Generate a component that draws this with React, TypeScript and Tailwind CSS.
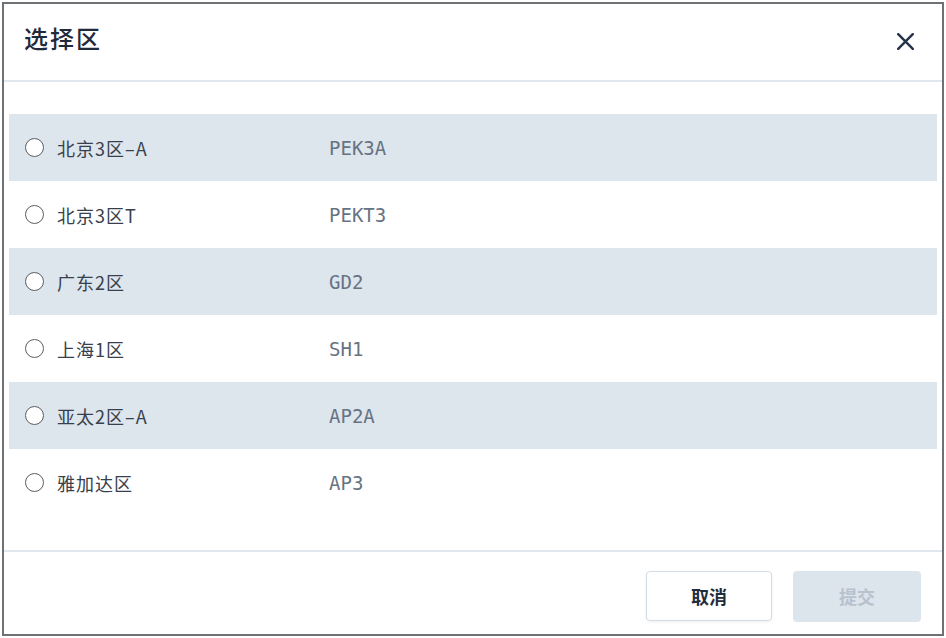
import React from "react";

const rows = [
  { name: "北京3区–A", code: "PEK3A" },
  { name: "北京3区T", code: "PEKT3" },
  { name: "广东2区", code: "GD2" },
  { name: "上海1区", code: "SH1" },
  { name: "亚太2区–A", code: "AP2A" },
  { name: "雅加达区", code: "AP3" },
];

export default function App() {
  return (
    <div className="w-[946px] h-[638px] bg-white p-[2px] [font-family:'Noto_Sans_CJK_SC','Noto_Sans',sans-serif]">
      <div className="h-full border-2 border-[#6f7275] bg-white flex flex-col">
        <div className="h-[78px] shrink-0 border-b-2 border-[#e0e7ee] flex items-start justify-between pl-[20px]">
          <div className="pt-[18px] text-[24px] leading-[32px] tracking-[2px] font-medium text-[#1f2a3b]">
            选择区
          </div>
          <svg
            className="mt-[29px] mr-[28px]"
            width="17"
            height="17"
            viewBox="0 0 17 17"
            fill="none"
          >
            <path d="M1.2 1.2 L15.8 15.8 M15.8 1.2 L1.2 15.8" stroke="#24324a" strokeWidth="2.4" strokeLinecap="round" />
          </svg>
        </div>
        <div className="h-[468px] shrink-0 pt-[32px] px-[5px]">
          {rows.map((r, i) => (
            <div
              key={r.code}
              className={`h-[67px] flex items-center ${i % 2 === 0 ? "bg-[#dde5ed]" : "bg-white"}`}
            >
              <div className="w-[320px] flex items-center pl-[16px]">
                <span className="w-[19px] h-[19px] rounded-full border-[1.5px] border-[#5b5d60] bg-white shrink-0" />
                <span className="ml-[13px] text-[18px] leading-[24px] tracking-[1px] text-[#37404b]">
                  {r.name}
                </span>
              </div>
              <div className="text-[19px] leading-[24px] text-[#677382] [font-family:'DejaVu_Sans_Mono',monospace]">
                {r.code}
              </div>
            </div>
          ))}
        </div>
        <div className="flex-1 border-t-2 border-[#e0e7ee] flex items-start justify-end gap-[21px] pt-[19px] pr-[21px]">
          <button className="w-[126px] h-[50px] rounded-[4px] border border-[#d4dde6] bg-white shadow-[0_1px_3px_rgba(30,50,80,0.08)] text-[18px] font-bold text-[#1f2d3d]">
            取消
          </button>
          <button className="w-[128px] h-[51px] rounded-[4px] bg-[#dce4ec] text-[18px] font-bold text-[#b7c2ce]">
            提交
          </button>
        </div>
      </div>
    </div>
  );
}
